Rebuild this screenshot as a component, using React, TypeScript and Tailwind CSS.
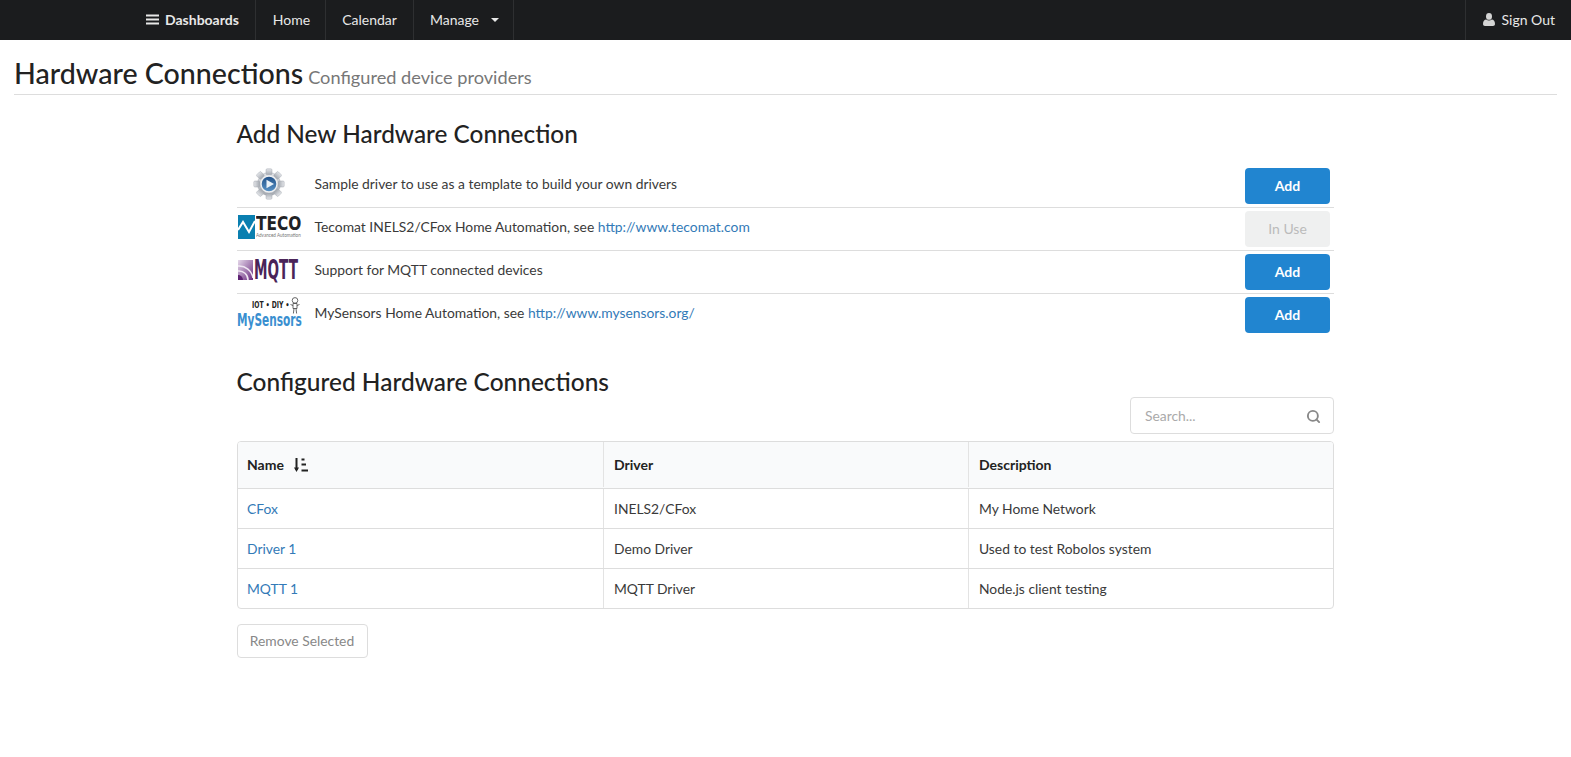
import React from 'react';
import { Search } from 'lucide-react';

const NavLink = ({ children, className = '' }: { children: React.ReactNode; className?: string }) => (
  <a className={`flex h-10 items-center border-r border-[#2e2f31] pb-[1px] text-[14px] text-[#e8e8e8] ${className}`}>
    {children}
  </a>
);

const BarsIcon = () => (
  <svg width="13" height="11" viewBox="0 0 13 11" className="mr-[6px]">
    <path d="M0 0.5h13v2H0zM0 4.5h13v2H0zM0 8.5h13v2H0z" fill="#e8e8e8" />
  </svg>
);

const UserSolid = () => (
  <svg width="12" height="13" viewBox="0 0 12 13" className="mr-[7px]">
    <ellipse cx="6" cy="3.4" rx="3" ry="3.4" fill="#d4d4d4" />
    <path d="M0 11c0-3 1.4-4.6 3.2-4.6C4 7 5 7.4 6 7.4S8 7 8.8 6.4C10.6 6.4 12 8 12 11c0 1.2-.8 2-2 2H2c-1.2 0-2-.8-2-2z" fill="#d4d4d4" />
  </svg>
);

const SortIcon = () => (
  <svg width="14" height="14" viewBox="0 0 14 14" className="ml-[10px]">
    <path d="M2.5 0V12" stroke="#222" strokeWidth="2" fill="none" />
    <path d="M0 9.5L2.5 14L5 9.5Z" fill="#222" />
    <path d="M7.5 0.5h3v2h-3zM7.5 5.5h4.5v2H7.5zM7.5 11.5h6.5v2H7.5z" fill="#222" />
  </svg>
);

const GearLogo = () => (
  <svg width="32" height="32" viewBox="0 0 32 32">
    <defs>
      <linearGradient id="gearFill" x1="0" y1="0" x2="0" y2="1">
        <stop offset="0" stopColor="#e4e6ea" />
        <stop offset="1" stopColor="#a4a9b0" />
      </linearGradient>
      <linearGradient id="discFill" x1="0" y1="0" x2="0" y2="1">
        <stop offset="0" stopColor="#1f4f86" />
        <stop offset="1" stopColor="#5a94c8" />
      </linearGradient>
    </defs>
    <g fill="url(#gearFill)" stroke="#a6abb2" strokeWidth="0.5">
      <circle cx="16" cy="16" r="11.5" />
      {[0, 45, 90, 135, 180, 225, 270, 315].map((a) => (
        <rect key={a} x="13" y="0.8" width="6" height="6" rx="1.2" transform={`rotate(${a} 16 16)`} />
      ))}
    </g>
    <circle cx="16" cy="16" r="8" fill="url(#discFill)" stroke="#eef0f2" strokeWidth="1.4" />
    <path d="M13.5 11.8 L21 16 L13.5 20.2 Z" fill="#e9f1f8" />
  </svg>
);

const TecoLogo = () => (
  <div className="flex h-[24px] w-[63px] items-stretch">
    <svg width="17" height="24" viewBox="0 0 17 24" className="shrink-0">
      <rect width="17" height="24" fill="#0a7fb0" />
      <path d="M0 15 L5 7 L11 17 L17 6" fill="none" stroke="#ffffff" strokeWidth="2" />
    </svg>
    <div className="ml-[1px] flex flex-col">
      <span className="origin-left scale-x-[.9] text-[19px] leading-[16px] font-bold text-[#1f2225] [font-family:'DejaVu_Sans_Condensed',sans-serif]">TECO</span>
      <span className="mt-[1px] origin-left scale-x-[.85] text-[5.4px] leading-[7px] whitespace-nowrap text-[#777]">Advanced Automation</span>
    </div>
  </div>
);

const MqttLogo = () => (
  <div className="flex h-[20px] w-[62px] items-center">
    <svg width="15" height="20" viewBox="0 0 15 20" className="shrink-0">
      <defs>
        <linearGradient id="mqttFill" x1="0" y1="0" x2="1" y2="1">
          <stop offset="0" stopColor="#e5d8ea" />
          <stop offset="1" stopColor="#6b2d80" />
        </linearGradient>
      </defs>
      <rect width="15" height="20" fill="url(#mqttFill)" />
      <path d="M0 6 A14 14 0 0 1 15 18 M0 11 A9 9 0 0 1 10 20" fill="none" stroke="#f0e6f3" strokeWidth="1.6" />
      <circle cx="0" cy="20" r="5" fill="#5e2273" />
    </svg>
    <span className="ml-[1px] origin-left scale-x-[.58] text-[26px] leading-none font-bold text-[#4a2459] [font-family:'DejaVu_Sans_Condensed',sans-serif]">MQTT</span>
  </div>
);

const MySensorsLogo = () => (
  <div className="relative h-[32px] w-[64px]">
    <span className="absolute top-[3px] left-[15px] origin-left scale-x-[.75] text-[9px] leading-[10px] font-bold whitespace-nowrap text-[#222] [font-family:'DejaVu_Sans_Condensed',sans-serif]">IOT • DIY •</span>
    <svg width="12" height="18" viewBox="0 0 12 18" className="absolute top-0 right-0">
      <circle cx="6" cy="3.4" r="2.8" fill="none" stroke="#444" strokeWidth="0.8" />
      <path d="M4 6.5h4v5H4zM1.5 7.5l2.5 1M10.5 7.5L8 8.5M5 11.5l-.6 5M7 11.5l.6 5" fill="none" stroke="#444" strokeWidth="0.8" />
    </svg>
    <span className="absolute bottom-0 left-0 origin-left scale-x-[.69] text-[17px] leading-[17px] font-bold whitespace-nowrap text-[#3a8fd0] [font-family:'DejaVu_Sans_Condensed',sans-serif]">MySensors</span>
  </div>
);

const drivers = [
  { logo: <GearLogo />, text: 'Sample driver to use as a template to build your own drivers', inUse: false },
  { logo: <TecoLogo />, text: 'Tecomat INELS2/CFox Home Automation, see ', link: 'http://www.tecomat.com', inUse: true },
  { logo: <MqttLogo />, text: 'Support for MQTT connected devices', inUse: false },
  { logo: <MySensorsLogo />, text: 'MySensors Home Automation, see ', link: 'http://www.mysensors.org/', inUse: false },
];

const rows = [
  ['CFox', 'INELS2/CFox', 'My Home Network'],
  ['Driver 1', 'Demo Driver', 'Used to test Robolos system'],
  ['MQTT 1', 'MQTT Driver', 'Node.js client testing'],
];

export default function App() {
  return (
    <div className="min-h-[757px] bg-white text-[13.85px] text-[#3a3a3a] [font-family:Lato,sans-serif]">
      <nav className="flex h-10 justify-between bg-[#1b1c1e]">
        <div className="flex pl-[131px]">
          <NavLink className="pr-[16px] pl-[15px] text-[14.3px] font-bold">
            <BarsIcon />
            Dashboards
          </NavLink>
          <NavLink className="pr-[15px] pl-[17px]">Home</NavLink>
          <NavLink className="px-[16px]">Calendar</NavLink>
          <NavLink className="pr-[14px] pl-[16px]">
            Manage
            <span className="ml-[12px] h-0 w-0 border-x-[4px] border-t-[4px] border-x-transparent border-t-[#e8e8e8]" />
          </NavLink>
        </div>
        <a className="flex h-10 items-center border-l border-[#2e2f31] pr-[16px] pb-[1px] pl-[17px] text-[14px] text-[#e8e8e8]">
          <UserSolid />
          Sign Out
        </a>
      </nav>

      <div className="mx-[14px] mt-[15px] flex h-[40px] items-baseline gap-[5px] border-b border-[#dddddd]">
        <h1 className="text-[28.6px] leading-[36px] font-medium text-[#222]">Hardware Connections</h1>
        <small className="text-[18.2px] text-[#777]">Configured device providers</small>
      </div>

      <main className="mt-[21px] ml-[237px] w-[1097px]">
        <h2 className="-ml-[0.5px] text-[24.35px] leading-[36px] font-medium text-[#222]">Add New Hardware Connection</h2>

        <div className="mt-[13px]">
          {drivers.map((d, i) => (
            <div key={i} className={`flex h-[43px] items-center border-b pr-[4px] ${i < 3 ? 'border-[#dddddd]' : 'border-transparent'}`}>
              <div className="flex w-[77.5px] shrink-0 justify-start pb-[4px]">
                <div className="flex w-[64px] justify-center">{d.logo}</div>
              </div>
              <div className="flex-1 pb-[3px]">
                {d.text}
                {d.link && <a className="text-[#337ab7]">{d.link}</a>}
              </div>
              {d.inUse ? (
                <button className="h-9 w-[85px] rounded-[4px] bg-[#eff0f0] pb-[2px] text-[14px] text-[#bbbbbb]">In Use</button>
              ) : (
                <button className="h-9 w-[85px] rounded-[4px] bg-[#2185d0] pb-[2px] text-[14px] font-bold text-white">Add</button>
              )}
            </div>
          ))}
        </div>

        <h2 className="mt-[27px] -ml-[0.5px] text-[24.45px] leading-[36px] font-medium text-[#222]">Configured Hardware Connections</h2>

        <div className="mt-[-3px] flex justify-end">
          <div className="flex h-[37px] w-[204px] items-center justify-between rounded-[4px] border border-[#dddddd] pt-[1px] pr-[12px] pl-[14px] text-[#aaaaaa]">
            <span>Search...</span>
            <Search className="h-[15px] w-[15px] text-[#888]" strokeWidth={3} />
          </div>
        </div>

        <div className="mt-[7px] overflow-hidden rounded-[4px] border border-[#dddddd]">
          <div className="flex h-[47px] border-b border-[#dddddd] bg-[#f9fafb] pb-[1px] text-[14px] font-bold text-[#222]">
            <div className="flex w-[366px] items-center border-r border-[#e3e3e3] pl-[9px]">
              Name
              <SortIcon />
            </div>
            <div className="flex w-[365px] items-center border-r border-[#e3e3e3] pl-[10px]">Driver</div>
            <div className="flex flex-1 items-center pl-[10px]">Description</div>
          </div>
          {rows.map((r, i) => (
            <div key={r[0]} className={`flex ${i < 2 ? 'h-10 border-b border-[#dddddd]' : 'h-[39px]'}`}>
              <div className="flex w-[366px] items-center border-r border-[#e3e3e3] pt-[1px] pl-[9px] text-[#337ab7]">{r[0]}</div>
              <div className="flex w-[365px] items-center border-r border-[#e3e3e3] pt-[1px] pl-[10px]">{r[1]}</div>
              <div className="flex flex-1 items-center pt-[1px] pl-[10px]">{r[2]}</div>
            </div>
          ))}
        </div>

        <button className="mt-[15px] h-[34px] w-[131px] rounded-[4px] border border-[#dddddd] bg-white pr-[1px] text-[#888]">Remove Selected</button>
      </main>
    </div>
  );
}
